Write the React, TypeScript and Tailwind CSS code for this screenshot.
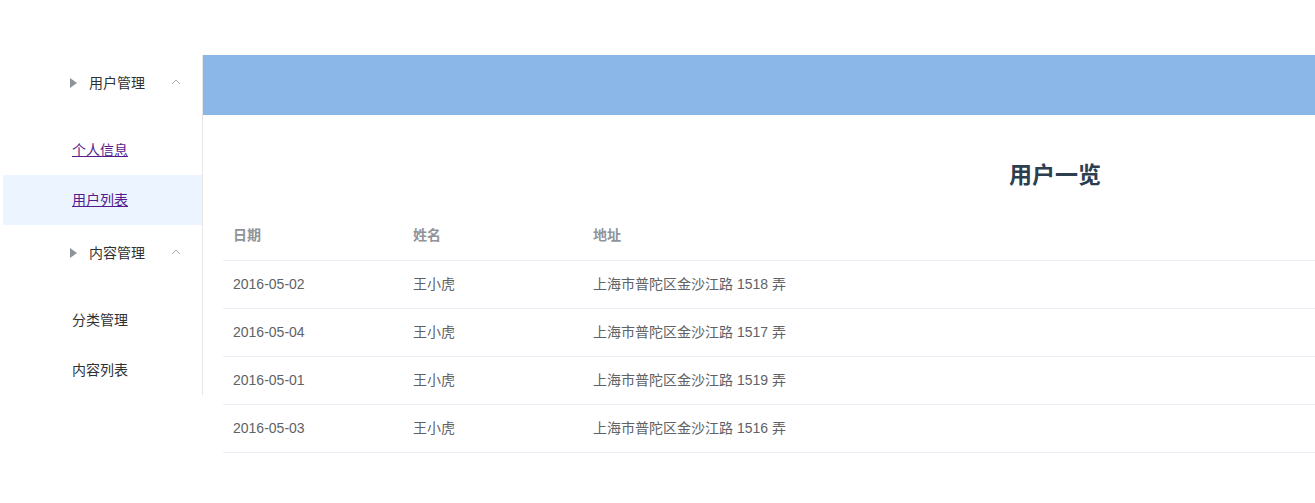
import React from 'react';

/* Sidebar menu + user table page */

const rows = [
  { date: '2016-05-02', name: '王小虎', address: '上海市普陀区金沙江路 1518 弄' },
  { date: '2016-05-04', name: '王小虎', address: '上海市普陀区金沙江路 1517 弄' },
  { date: '2016-05-01', name: '王小虎', address: '上海市普陀区金沙江路 1519 弄' },
  { date: '2016-05-03', name: '王小虎', address: '上海市普陀区金沙江路 1516 弄' },
];

function SubmenuTitle({ label }: { label: string }) {
  return (
    <div className="h-[56px] flex items-center text-[14px] text-[#303133]">
      <svg width="7" height="10" viewBox="0 0 7 10" className="ml-[67px]">
        <path d="M0 0 L7 5 L0 10 Z" fill="#8f949c" />
      </svg>
      <span className="ml-[12px]">{label}</span>
      <svg width="10" height="6" viewBox="0 0 10 6" className="ml-[26px] -mt-[2px]">
        <path d="M1 5 L5 1 L9 5" fill="none" stroke="#a9adb5" strokeWidth="1" />
      </svg>
    </div>
  );
}

function MenuItem({ label, link, active }: { label: string; link?: boolean; active?: boolean }) {
  return (
    <div
      className={`h-[50px] flex items-center pl-[69px] text-[14px] ${active ? 'bg-[#ecf5ff]' : ''}`}
    >
      {link ? (
        <a href="#" className="text-[#551a8b] underline">
          {label}
        </a>
      ) : (
        <span className="text-[#303133]">{label}</span>
      )}
    </div>
  );
}

export default function App() {
  return (
    <div
      className="w-[1315px] h-[503px] overflow-hidden bg-white pt-[55px] flex"
      style={{ fontFamily: '"Liberation Sans", "Noto Sans CJK SC", sans-serif' }}
    >
      {/* Sidebar */}
      <aside className="ml-[3px] w-[200px] shrink-0 self-start border-r border-[#e6e6e6] bg-white">
        <SubmenuTitle label="用户管理" />
        <div className="h-[14px]" />
        <MenuItem label="个人信息" link />
        <MenuItem label="用户列表" link active />
        <SubmenuTitle label="内容管理" />
        <div className="h-[14px]" />
        <MenuItem label="分类管理" />
        <MenuItem label="内容列表" />
      </aside>

      {/* Main */}
      <div className="flex-1 min-w-0 overflow-hidden">
        <header className="h-[60px] bg-[#8ab6e8]" />
        <main className="px-[20px] w-[1704px]">
          <h2 className="mt-[44px] h-[32px] leading-[32px] text-center text-[23px] font-bold text-[#2c3e50]">
            用户一览
          </h2>
          <table className="mt-[21px] w-full border-collapse text-[14px]">
            <thead>
              <tr className="border-b border-[#ebeef5]">
                <th className="w-[180px] h-[48px] px-[10px] text-left font-bold text-[#909399]">日期</th>
                <th className="w-[180px] px-[10px] text-left font-bold text-[#909399]">姓名</th>
                <th className="px-[10px] text-left font-bold text-[#909399]">地址</th>
              </tr>
            </thead>
            <tbody>
              {rows.map((r) => (
                <tr key={r.date} className="border-b border-[#ebeef5] text-[#606266]">
                  <td className="h-[48px] px-[10px]">{r.date}</td>
                  <td className="px-[10px]">{r.name}</td>
                  <td className="px-[10px]">{r.address}</td>
                </tr>
              ))}
            </tbody>
          </table>
        </main>
      </div>
    </div>
  );
}
